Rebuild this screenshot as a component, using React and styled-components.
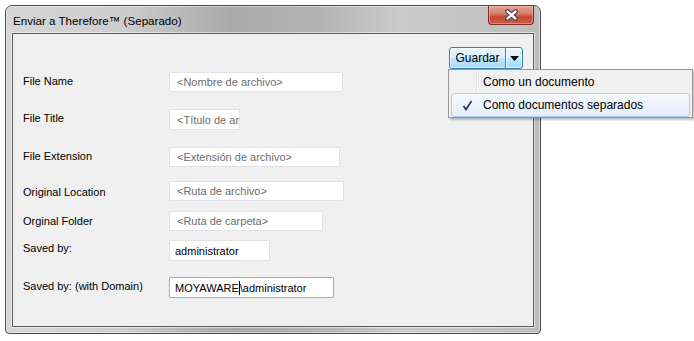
import styled, { createGlobalStyle } from "styled-components";

const GlobalStyle = createGlobalStyle`
  html, body {
    margin: 0;
    padding: 0;
    background: #ffffff;
  }
  body {
    padding: 5px;
    font-family: "Liberation Sans", Arial, sans-serif;
  }
`;

const Window = styled.div`
  position: relative;
  box-sizing: border-box;
  width: 536px;
  height: 329px;
  display: flex;
  flex-direction: column;
  padding: 0 6px 6px;
  border: 1px solid #4b4b4b;
  border-radius: 7px 7px 4px 4px;
  background: linear-gradient(
    90deg,
    #d6d6d6 0%,
    #cdcdcd 22%,
    #a9a9a9 42%,
    #b3b3b3 58%,
    #cbcbcb 74%,
    #bdbdbd 100%
  );
  box-shadow: inset 0 0 0 1px rgba(255, 255, 255, 0.45);
`;

const TitleBar = styled.div`
  height: 27px;
  display: flex;
  align-items: flex-start;
  justify-content: space-between;
`;

const Title = styled.div`
  padding: 8px 0 0 1px;
  font-size: 11.6px;
  line-height: 14px;
  color: #000000;
`;

const CloseButton = styled.div`
  box-sizing: border-box;
  width: 46px;
  height: 19px;
  display: flex;
  align-items: center;
  justify-content: center;
  border: 1px solid #7b3026;
  border-top: none;
  border-radius: 0 0 4px 4px;
  background: linear-gradient(
    180deg,
    #e3a597 0%,
    #d88373 40%,
    #c64a39 60%,
    #cf5a44 100%
  );
  box-shadow: inset 0 0 0 1px rgba(255, 200, 190, 0.45);
`;

const Client = styled.div`
  flex: 1;
  display: flex;
  flex-direction: column;
  background: #f0f0f0;
  border: 1px solid #5e5e5e;
  box-shadow: 0 0 0 1px rgba(255, 255, 255, 0.5);
`;

const Toolbar = styled.div`
  display: flex;
  justify-content: flex-end;
  padding: 13px 10px 0;
`;

const SplitButton = styled.div`
  position: relative;
  box-sizing: border-box;
  width: 74px;
  height: 22px;
  display: flex;
  border: 1px solid #3c7fb1;
  border-radius: 3px;
  background: linear-gradient(180deg, #eaf6fd 0%, #d9f0fc 48%, #bee6fd 52%, #a7d9f5 100%);
  box-shadow: inset 0 0 0 1px rgba(255, 255, 255, 0.6);
`;

const ButtonLabel = styled.div`
  width: 55px;
  display: flex;
  align-items: center;
  justify-content: center;
  font-size: 12px;
  color: #000000;
  border-right: 1px solid #3c7fb1;
  box-shadow: 1px 0 0 #ffffff;
`;

const ButtonArrow = styled.div`
  flex: 1;
  display: flex;
  align-items: center;
  justify-content: center;
`;

const Menu = styled.div`
  position: absolute;
  top: 21px;
  left: -2px;
  z-index: 2;
  box-sizing: border-box;
  width: 245px;
  height: 49px;
  padding: 1px 2px;
  border: 1px solid #979797;
  background: linear-gradient(90deg, #f1f1f1 0, #f1f1f1 27px, #e2e3e3 27px, #e2e3e3 28px, #ffffff 28px, #ffffff 29px, #f0f0f0 29px);
  box-shadow: 2px 2px 2px rgba(0, 0, 0, 0.25);
`;

const MenuItem = styled.div`
  box-sizing: border-box;
  height: ${(p) => (p.$tall ? 24 : 22)}px;
  display: flex;
  align-items: center;
  border: 1px solid ${(p) => (p.$active ? "#aecff7" : "transparent")};
  border-radius: 3px;
  background: ${(p) =>
    p.$active ? "linear-gradient(180deg, #f3f8fe 0%, #e5effb 100%)" : "transparent"};
  font-size: 12px;
  color: #000000;
`;

const CheckCell = styled.div`
  width: 31px;
  display: flex;
  align-items: center;
  justify-content: center;
`;

const Form = styled.div`
  display: flex;
  flex-direction: column;
  margin-top: 3px;
  padding-left: 10px;
`;

const Row = styled.div`
  height: ${(p) => p.$pitch}px;
  display: flex;
  align-items: flex-start;
`;

const Label = styled.div`
  width: 146px;
  padding-top: ${(p) => p.$offset}px;
  font-size: 11px;
  line-height: 13px;
  color: #000000;
`;

const Field = styled.div`
  box-sizing: border-box;
  width: ${(p) => p.$width}px;
  height: ${(p) => p.$height}px;
  display: flex;
  align-items: center;
  padding-left: ${(p) => (p.$ghost ? 7 : 5)}px;
  overflow: hidden;
  white-space: nowrap;
  background: #ffffff;
  border: 1px solid ${(p) => (p.$focus ? "#7eb4ea" : "#e2e3ea")};
  border-radius: 1px;
  font-size: 11px;
  color: ${(p) => (p.$ghost ? "#6d6d6d" : "#000000")};
`;

const Caret = styled.span`
  display: inline-block;
  width: 1px;
  height: 14px;
  background: #000000;
  vertical-align: middle;
`;

const fields = [
  { label: "File Name", placeholder: "<Nombre de archivo>", width: 174, height: 20, pitch: 37, offset: 3 },
  { label: "File Title", placeholder: "<Título de archivo>", width: 71, height: 21, pitch: 38, offset: 3 },
  { label: "File Extension", placeholder: "<Extensión de archivo>", width: 171, height: 20, pitch: 34, offset: 3 },
  { label: "Original Location", placeholder: "<Ruta de archivo>", width: 175, height: 20, pitch: 30, offset: 5 },
  { label: "Orginal Folder", placeholder: "<Ruta de carpeta>", width: 154, height: 20, pitch: 29, offset: 4 },
  { label: "Saved by:", value: "administrator", width: 101, height: 21, pitch: 37, offset: 2 },
];

const CloseGlyph = () => (
  <svg width="15" height="12" viewBox="0 0 15 12">
    <path d="M3.5 2.5 L11.5 9.5 M11.5 2.5 L3.5 9.5" stroke="#3d3d3d" strokeWidth="4.6" strokeLinecap="round" />
    <path d="M3.5 2.5 L11.5 9.5 M11.5 2.5 L3.5 9.5" stroke="#ffffff" strokeWidth="2.4" strokeLinecap="round" />
  </svg>
);

const ArrowGlyph = () => (
  <svg width="9" height="5" viewBox="0 0 9 5">
    <path d="M0 0 H9 L4.5 5 Z" fill="#000000" />
  </svg>
);

const CheckGlyph = () => (
  <svg width="11" height="11" viewBox="0 0 11 11">
    <path d="M1.5 6 L4 9.5 L9.5 1" fill="none" stroke="#1e2b73" strokeWidth="1.6" />
  </svg>
);

export default function App() {
  return (
    <>
      <GlobalStyle />
      <Window>
        <TitleBar>
          <Title>Enviar a Therefore™ (Separado)</Title>
          <CloseButton>
            <CloseGlyph />
          </CloseButton>
        </TitleBar>
        <Client>
          <Toolbar>
            <SplitButton>
              <ButtonLabel>Guardar</ButtonLabel>
              <ButtonArrow>
                <ArrowGlyph />
              </ButtonArrow>
              <Menu>
                <MenuItem>
                  <CheckCell />
                  Como un documento
                </MenuItem>
                <MenuItem $active $tall>
                  <CheckCell>
                    <CheckGlyph />
                  </CheckCell>
                  Como documentos separados
                </MenuItem>
              </Menu>
            </SplitButton>
          </Toolbar>
          <Form>
            {fields.map((f) => (
              <Row key={f.label} $pitch={f.pitch}>
                <Label $offset={f.offset}>{f.label}</Label>
                <Field $width={f.width} $height={f.height} $ghost={!f.value}>
                  {f.value || f.placeholder}
                </Field>
              </Row>
            ))}
            <Row $pitch={21}>
              <Label $offset={3}>Saved by: (with Domain)</Label>
              <Field $width={165} $height={21} $focus>
                MOYAWARE
                <Caret />
                \administrator
              </Field>
            </Row>
          </Form>
        </Client>
      </Window>
    </>
  );
}
